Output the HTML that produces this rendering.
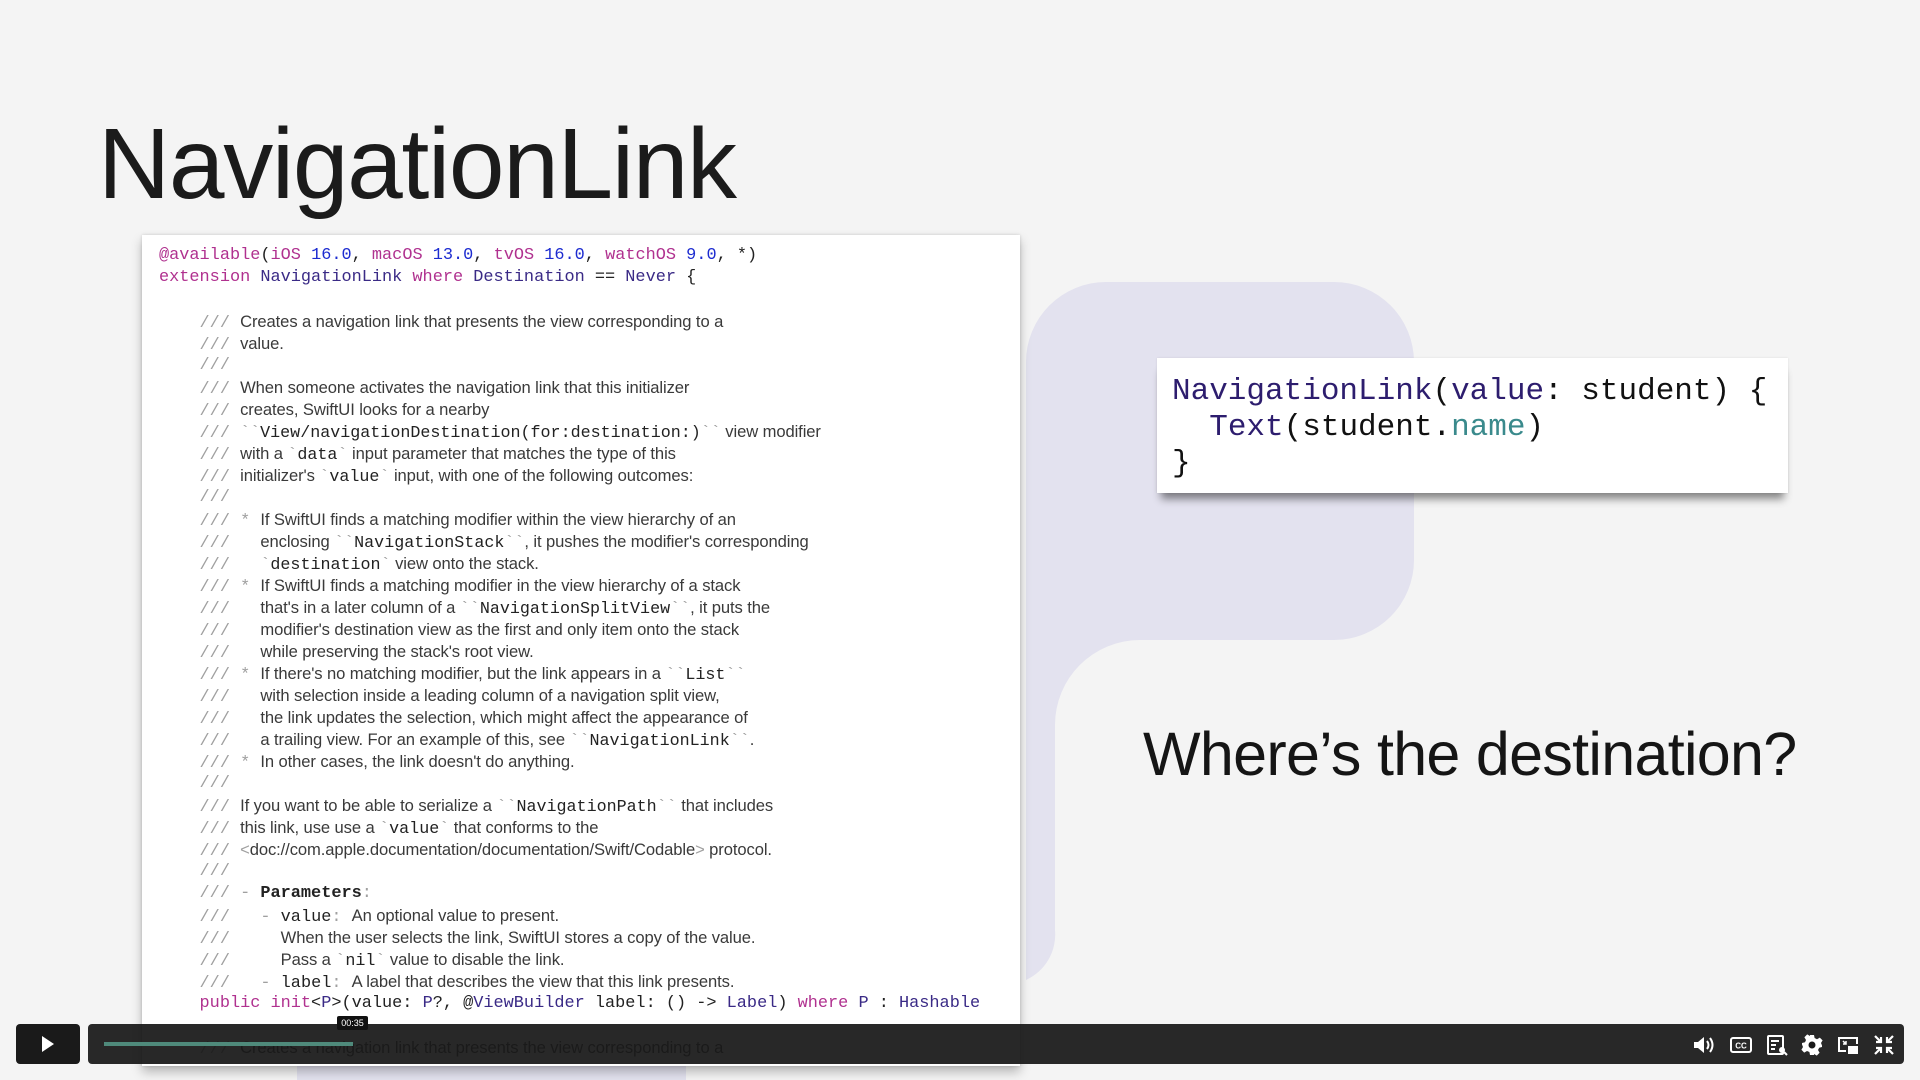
<!DOCTYPE html>
<html><head><meta charset="utf-8"><style>
*{margin:0;padding:0;box-sizing:border-box}
body{width:1920px;height:1080px;background:#f4f4f4;position:relative;overflow:hidden;font-family:"Liberation Sans",sans-serif}
.title{position:absolute;left:98px;top:114px;font-size:100px;letter-spacing:-1.3px;color:#1b1b1b;line-height:1}
.panel{position:absolute;left:142px;top:235px;width:878px;height:831px;background:#fff;box-shadow:0 6px 10px rgba(0,0,0,.25),0 0 3px rgba(0,0,0,.15)}
.lines{position:absolute;left:17px;top:10px}
.l{height:22px;line-height:22px;white-space:pre;font-family:"Liberation Mono",monospace;font-size:16.9px;color:#222}
.s{font-family:"Liberation Sans",sans-serif;font-size:16.6px;color:#3a3a3a;letter-spacing:-.1px}
.m{font-family:"Liberation Mono",monospace;font-size:16.7px;color:#222}
.c{color:#a0a0a0}
.k{color:#b0318f}
.n{color:#1c2bd0}
.t{color:#3a2a86}
.card{position:absolute;left:1157px;top:358px;width:631px;height:135px;background:#fff;box-shadow:0 10px 8px -4px rgba(0,0,0,.45),0 0 2px rgba(0,0,0,.1)}
.card pre{position:absolute;left:15px;top:16px;font-family:"Liberation Mono",monospace;font-size:31px;line-height:36px;color:#111}
.q{position:absolute;left:1143px;top:724px;font-size:61px;letter-spacing:-0.7px;color:#151515;line-height:1}
.play{position:absolute;left:16px;top:1024px;width:64px;height:40px;background:#1a1a1a;border-radius:4px}
.bar{position:absolute;left:88px;top:1024px;width:1816px;height:40px;background:rgba(24,24,24,.93);border-radius:4px}
.prog{position:absolute;left:104px;top:1042px;width:249px;height:4px;background:#4f8a7b}
.tip{position:absolute;left:337px;top:1016px;width:31px;height:14px;background:#111;color:#fff;font-size:9px;line-height:14px;text-align:center;border-radius:2px}
.ic{position:absolute;top:1033px}
</style></head><body>
<svg style="position:absolute;left:0;top:0" width="1920" height="1080"><path fill="#e3e2ef" d="M1026,362 A80,80 0 0 1 1106,282 H1334 A80,80 0 0 1 1414,362 V560 A80,80 0 0 1 1334,640 H1140 A85,85 0 0 0 1055,725 V930 A50,50 0 0 1 1026,980 Z"/><rect x="297" y="1060" width="389" height="20" fill="#e3e2ef"/></svg>
<div class="title">NavigationLink</div>
<div class="panel"><div class="lines">
<div class="l"><span class="k">@available</span>(<span class="k">iOS</span> <span class="n">16.0</span>, <span class="k">macOS</span> <span class="n">13.0</span>, <span class="k">tvOS</span> <span class="n">16.0</span>, <span class="k">watchOS</span> <span class="n">9.0</span>, *)</div>
<div class="l"><span class="k">extension</span> <span class="t">NavigationLink</span> <span class="k">where</span> <span class="t">Destination</span> == <span class="t">Never</span> {</div>
<div class="l"> </div>
<div class="l">    <span class="c">///</span> <span class="s">Creates a navigation link that presents the view corresponding to a</span></div>
<div class="l">    <span class="c">///</span> <span class="s">value.</span></div>
<div class="l">    <span class="c">///</span></div>
<div class="l">    <span class="c">///</span> <span class="s">When someone activates the navigation link that this initializer</span></div>
<div class="l">    <span class="c">///</span> <span class="s">creates, SwiftUI looks for a nearby</span></div>
<div class="l">    <span class="c">///</span> <span class="m"><span class="c">``</span>View/navigationDestination(for:destination:)<span class="c">``</span></span><span class="s"> view modifier</span></div>
<div class="l">    <span class="c">///</span> <span class="s">with a </span><span class="m"><span class="c">`</span>data<span class="c">`</span></span><span class="s"> input parameter that matches the type of this</span></div>
<div class="l">    <span class="c">///</span> <span class="s">initializer's </span><span class="m"><span class="c">`</span>value<span class="c">`</span></span><span class="s"> input, with one of the following outcomes:</span></div>
<div class="l">    <span class="c">///</span></div>
<div class="l">    <span class="c">/// *</span> <span class="s">If SwiftUI finds a matching modifier within the view hierarchy of an</span></div>
<div class="l">    <span class="c">///</span>   <span class="s">enclosing </span><span class="m"><span class="c">``</span>NavigationStack<span class="c">``</span></span><span class="s">, it pushes the modifier's corresponding</span></div>
<div class="l">    <span class="c">///</span>   <span class="m"><span class="c">`</span>destination<span class="c">`</span></span><span class="s"> view onto the stack.</span></div>
<div class="l">    <span class="c">/// *</span> <span class="s">If SwiftUI finds a matching modifier in the view hierarchy of a stack</span></div>
<div class="l">    <span class="c">///</span>   <span class="s">that's in a later column of a </span><span class="m"><span class="c">``</span>NavigationSplitView<span class="c">``</span></span><span class="s">, it puts the</span></div>
<div class="l">    <span class="c">///</span>   <span class="s">modifier's destination view as the first and only item onto the stack</span></div>
<div class="l">    <span class="c">///</span>   <span class="s">while preserving the stack's root view.</span></div>
<div class="l">    <span class="c">/// *</span> <span class="s">If there's no matching modifier, but the link appears in a </span><span class="m"><span class="c">``</span>List<span class="c">``</span></span></div>
<div class="l">    <span class="c">///</span>   <span class="s">with selection inside a leading column of a navigation split view,</span></div>
<div class="l">    <span class="c">///</span>   <span class="s">the link updates the selection, which might affect the appearance of</span></div>
<div class="l">    <span class="c">///</span>   <span class="s">a trailing view. For an example of this, see </span><span class="m"><span class="c">``</span>NavigationLink<span class="c">``</span></span><span class="s">.</span></div>
<div class="l">    <span class="c">/// *</span> <span class="s">In other cases, the link doesn't do anything.</span></div>
<div class="l">    <span class="c">///</span></div>
<div class="l">    <span class="c">///</span> <span class="s">If you want to be able to serialize a </span><span class="m"><span class="c">``</span>NavigationPath<span class="c">``</span></span><span class="s"> that includes</span></div>
<div class="l">    <span class="c">///</span> <span class="s">this link, use use a </span><span class="m"><span class="c">`</span>value<span class="c">`</span></span><span class="s"> that conforms to the</span></div>
<div class="l">    <span class="c">///</span> <span class="s"><span class="c">&lt;</span>doc://com.apple.documentation/documentation/Swift/Codable<span class="c">&gt;</span> protocol.</span></div>
<div class="l">    <span class="c">///</span></div>
<div class="l">    <span class="c">/// -</span> <b>Parameters</b><span class="c">:</span></div>
<div class="l">    <span class="c">///</span>   <span class="c">-</span> value<span class="c">:</span> <span class="s">An optional value to present.</span></div>
<div class="l">    <span class="c">///</span>     <span class="s">When the user selects the link, SwiftUI stores a copy of the value.</span></div>
<div class="l">    <span class="c">///</span>     <span class="s">Pass a </span><span class="m"><span class="c">`</span>nil<span class="c">`</span></span><span class="s"> value to disable the link.</span></div>
<div class="l">    <span class="c">///</span>   <span class="c">-</span> label<span class="c">:</span> <span class="s">A label that describes the view that this link presents.</span></div>
<div class="l">    <span class="k">public init</span>&lt;<span class="t">P</span>&gt;(value: <span class="t">P</span>?, @<span class="t">ViewBuilder</span> label: () -&gt; <span class="t">Label</span>) <span class="k">where</span> <span class="t">P</span> : <span class="t">Hashable</span></div>
<div class="l"> </div>
<div class="l">    <span class="c">///</span> <span class="s">Creates a navigation link that presents the view corresponding to a</span></div>
</div></div>
<div class="card"><pre><span style="color:#2d1d6e">NavigationLink</span>(<span style="color:#2d1d6e">value</span>: student) {
  <span style="color:#2d1d6e">Text</span>(student.<span style="color:#3a8a8c">name</span>)
}</pre></div>
<div class="q">Where’s the destination?</div>
<div class="play"><svg style="position:absolute;left:25px;top:12px" width="14" height="16"><path d="M1,0 L13,8 L1,16 Z" fill="#fff"/></svg></div>
<div class="bar"></div>
<div class="prog"></div>
<div class="tip">00:35</div>
<svg class="ic" style="left:1692px" width="24" height="24" viewBox="0 0 24 24"><path d="M2,9 H6 L12,4 V20 L6,15 H2 Z" fill="#fff"/><path d="M15,8 Q18,12 15,16 M18,5 Q23,12 18,19" stroke="#fff" stroke-width="2" fill="none"/></svg>
<svg class="ic" style="left:1729px" width="24" height="24" viewBox="0 0 24 24"><rect x="2" y="5" width="20" height="14" rx="2" stroke="#fff" stroke-width="2" fill="none"/><text x="12" y="15.5" font-size="8" font-weight="bold" fill="#fff" text-anchor="middle" font-family="Liberation Sans">CC</text></svg>
<svg class="ic" style="left:1765px" width="24" height="24" viewBox="0 0 24 24"><rect x="3" y="3" width="15" height="18" rx="1" stroke="#fff" stroke-width="2" fill="none"/><path d="M6,8 H14 M6,12 H11 M6,16 H10" stroke="#fff" stroke-width="2"/><circle cx="17" cy="17" r="3" fill="#fff"/><path d="M19,19 L22,22" stroke="#fff" stroke-width="2"/></svg>
<svg class="ic" style="left:1800px" width="24" height="24" viewBox="0 0 24 24"><path fill="#fff" d="M10,2 H14 L14.6,5 L17,6.2 L19.8,4.6 L22.6,7.4 L21,10 L22,12.5 L22,14 L19.2,14.8 L18,17 L19.6,19.8 L16.8,22.6 L14,21 L14,22 H10 L9.4,19 L7,18 L4.2,19.6 L1.4,16.8 L3,14 L2,11.5 V10 L5,9.2 L6,7 L4.4,4.2 L7.2,1.4 L10,3 Z"/><circle cx="12" cy="12" r="3.5" fill="#181818"/></svg>
<svg class="ic" style="left:1836px" width="24" height="24" viewBox="0 0 24 24"><path d="M21,11 V5 H3 V18 H10" stroke="#fff" stroke-width="2" fill="none"/><rect x="12" y="13" width="10" height="8" fill="#fff"/><path d="M7,8 L10,11 M10,8 V11 H7" stroke="#fff" stroke-width="1.5" fill="none"/></svg>
<svg class="ic" style="left:1872px" width="24" height="24" viewBox="0 0 24 24"><path d="M3,3 L9,9 M9,4 V9 H4 M21,3 L15,9 M15,4 V9 H20 M3,21 L9,15 M4,15 H9 V20 M21,21 L15,15 M20,15 H15 V20" stroke="#fff" stroke-width="2.2" fill="none"/></svg>
</body></html>
